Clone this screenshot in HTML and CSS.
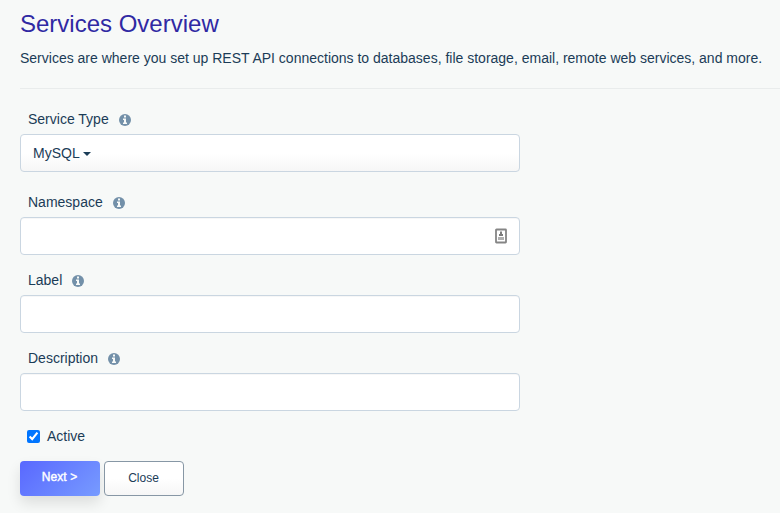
FILE: index.html
```html
<!DOCTYPE html>
<html lang="en">
<head>
<meta charset="utf-8">
<title>Services Overview</title>
<link rel="stylesheet" href="styles.css">
</head>
<body>
<svg class="defs" width="0" height="0"><symbol id="info" viewBox="0 0 12 12"><circle cx="6" cy="6" r="6" fill="#7390a9"/><path fill="#f7f9f8" d="M5 1.500h2v2H5zM4 4.500h3v4h1V10H4V8.500h1V6H4z"/></symbol></svg>
<header class="intro">
<h1>Services Overview</h1>
<p>Services are where you set up REST API connections to databases, file storage, email, remote web services, and more.</p>
</header>
<form class="form">
<div class="field type"><label>Service Type<svg class="info"><use href="#info"/></svg></label><div class="box select">MySQL<span class="caret"></span></div></div>
<div class="field"><label>Namespace<svg class="info"><use href="#info"/></svg></label><div class="box namespace"><svg class="key" viewBox="0 0 12 16"><rect x="1" y="1.500" width="10" height="13" rx=".5" fill="#fff" stroke="#858585" stroke-width="1.800"/><path fill="#7c7c7c" d="M5 3.500h2V6h1v2H4V6h1z"/><path fill="#b0b0b0" d="M3 9h6v3H3z"/></svg></div></div>
<div class="field"><label>Label<svg class="info"><use href="#info"/></svg></label><div class="box"></div></div>
<div class="field"><label>Description<svg class="info"><use href="#info"/></svg></label><div class="box"></div></div>
<label class="active"><input type="checkbox" checked>Active</label>
<div class="actions"><button type="button" class="next">Next &gt;</button><button type="button" class="close">Close</button></div>
</form>
</body>
</html>
```
FILE: styles.css
```css
* { box-sizing: border-box; }
body { margin: 0; height: 513px; overflow: hidden; background: #f7f9f8; color: #1b3c57; font: 14px/20px "Liberation Sans", Arial, sans-serif; }
.defs { position: absolute; }
.intro { margin-left: 20px; height: 89px; border-bottom: 1px solid #e9ecec; padding-top: 9px; white-space: nowrap; }
h1 { margin: 0; font-size: 24px; line-height: 29px; font-weight: 400; color: #3029a3; }
p { margin: 10px 0 0; }
.form { width: 500px; margin: 20px 0 0 20px; }
.field { margin-bottom: 15px; }
.type { margin-bottom: 20px; }
.field label { display: flex; align-items: center; height: 25px; padding: 0 0 6px 8px; }
.info { width: 12px; height: 12px; margin: 2px 0 0 10px; }
.box { height: 38px; border: 1px solid #cad6e1; border-radius: 4px; background: #fff; box-shadow: inset 0 1px 1px #00000009; display: flex; align-items: center; }
.select { padding-left: 12px; background: linear-gradient(#fff 50%, #f6f6f6); box-shadow: none; }
.caret { border: 4px solid transparent; border-top-color: #1b3c57; border-bottom: 0; margin: 1px 0 0 3px; }
.namespace { justify-content: flex-end; padding-right: 12px; }
.key { width: 12px; height: 16px; }
.active { display: flex; align-items: center; height: 20px; padding-left: 7px; }
.active input { width: 13px; height: 13px; margin: 0 7px 0 0; accent-color: #0075ff; }
.actions { display: flex; gap: 4px; margin-top: 15px; }
button { width: 80px; height: 35px; border-radius: 4px; font: 12px/20px "Liberation Sans", Arial, sans-serif; padding: 0 1px 2px 0; }
.next { border: 0; color: #fff; -webkit-text-stroke: .4px #fff; letter-spacing: .1px; padding-bottom: 3px; background: linear-gradient(135deg, #5968ff, #779bff); box-shadow: 0 7px 14px #0000001c; }
.close { border: 1px solid #8797a5; background: linear-gradient(#fff 50%, #f6f6f6); color: #1b3c57; }
```
